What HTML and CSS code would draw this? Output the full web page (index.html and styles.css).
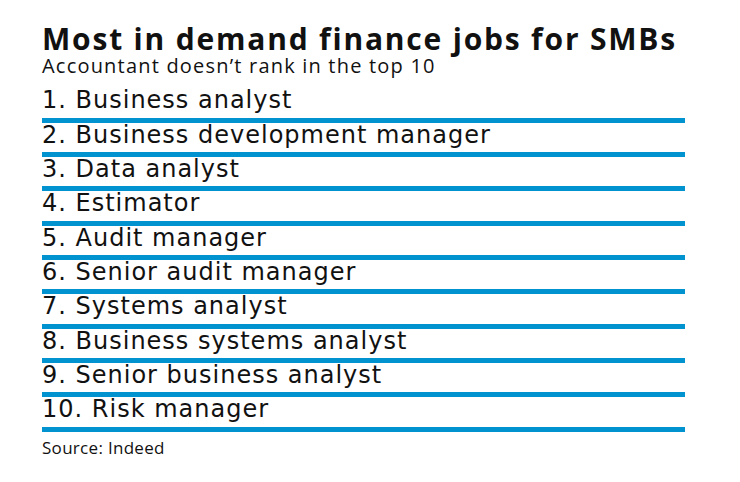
FILE: index.html
```html
<!DOCTYPE html>
<html>
<head>
<meta charset="utf-8">
<link rel="stylesheet" href="styles.css">
</head>
<body>
<div class="chart">
  <h1 class="title">Most in demand finance jobs for SMBs</h1>
  <p class="subtitle">Accountant doesn’t rank in the top 10</p>
  <ol class="list">
    <li class="row">1. Business analyst</li>
    <li class="row">2. Business development manager</li>
    <li class="row">3. Data analyst</li>
    <li class="row">4. Estimator</li>
    <li class="row">5. Audit manager</li>
    <li class="row">6. Senior audit manager</li>
    <li class="row">7. Systems analyst</li>
    <li class="row">8. Business systems analyst</li>
    <li class="row">9. Senior business analyst</li>
    <li class="row">10. Risk manager</li>
  </ol>
  <p class="source">Source: Indeed</p>
</div>
</body>
</html>
```
FILE: styles.css
```css
html, body {
  margin: 0;
  padding: 0;
  background: #ffffff;
}
.chart {
  padding: 22px 55px 0 42px;
  color: #111111;
}
.title {
  margin: 0;
  font-family: "Open Sans", sans-serif;
  font-weight: 700;
  font-size: 30px;
  line-height: 34px;
  letter-spacing: 1.8px;
}
.subtitle {
  margin: 0;
  font-family: "Open Sans", sans-serif;
  font-size: 20px;
  line-height: 20px;
  letter-spacing: 1.2px;
}
.list {
  list-style: none;
  margin: 12.3px 0 0;
  padding: 0;
}
.row {
  font-family: "DejaVu Sans", sans-serif;
  font-size: 24px;
  line-height: 25.33px;
  padding-bottom: 4px;
  letter-spacing: 1px;
  border-bottom: 5px solid #0093d0;
}
.source {
  margin: 6px 0 0;
  font-family: "Open Sans", sans-serif;
  font-size: 17px;
  line-height: 20px;
  letter-spacing: 0.3px;
}
```
